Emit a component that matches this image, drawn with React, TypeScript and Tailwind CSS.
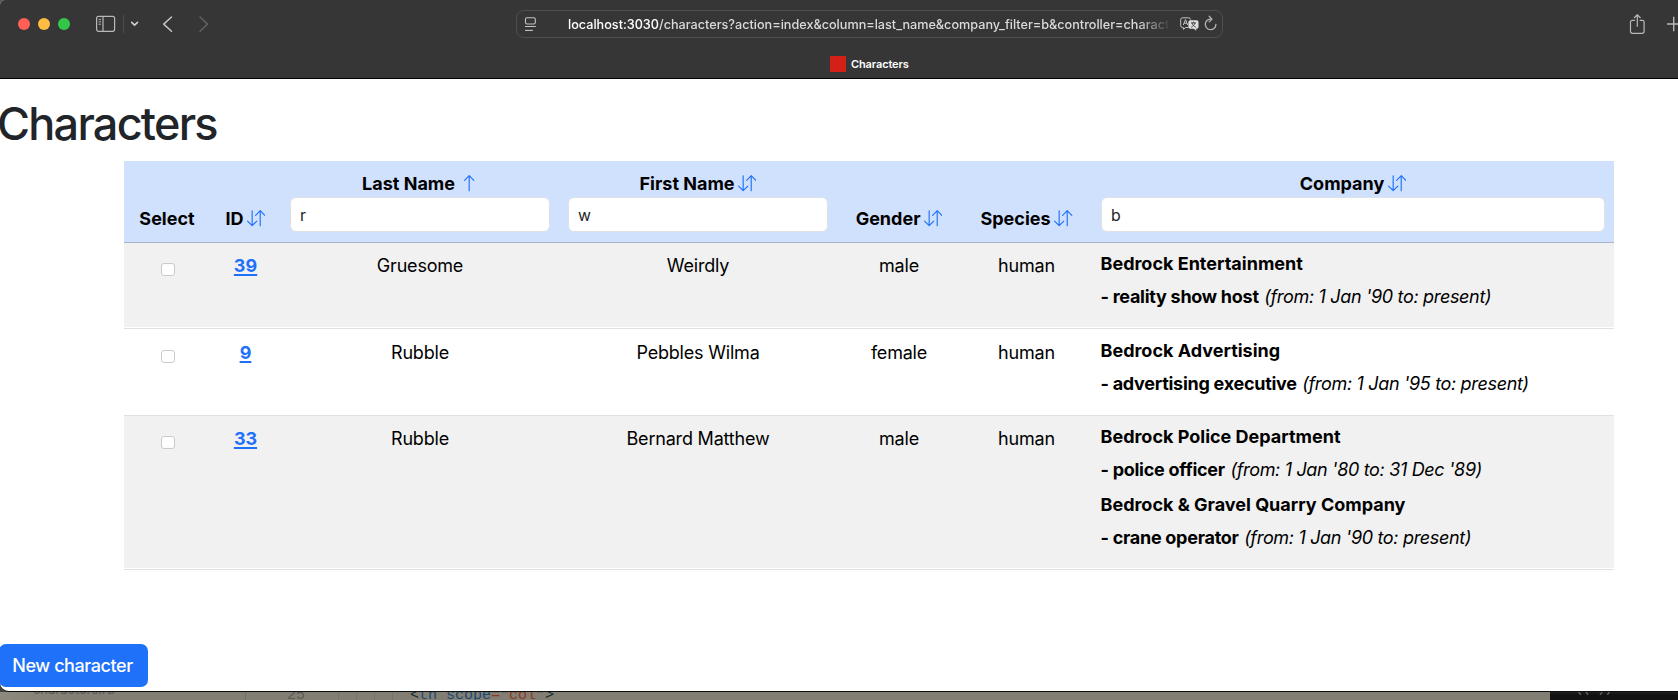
import type { ReactNode } from "react";
import { BsArrowDownUp, BsArrowUp } from "react-icons/bs";

type Job = { company: string; role: string; dates: string };
type Character = { id: number; last: string; first: string; gender: string; species: string; jobs: Job[] };

const characters: Character[] = [
  {
    id: 39,
    last: "Gruesome",
    first: "Weirdly",
    gender: "male",
    species: "human",
    jobs: [{ company: "Bedrock Entertainment", role: "reality show host", dates: "(from: 1 Jan '90 to: present)" }],
  },
  {
    id: 9,
    last: "Rubble",
    first: "Pebbles Wilma",
    gender: "female",
    species: "human",
    jobs: [{ company: "Bedrock Advertising", role: "advertising executive", dates: "(from: 1 Jan '95 to: present)" }],
  },
  {
    id: 33,
    last: "Rubble",
    first: "Bernard Matthew",
    gender: "male",
    species: "human",
    jobs: [
      { company: "Bedrock Police Department", role: "police officer", dates: "(from: 1 Jan '80 to: 31 Dec '89)" },
      { company: "Bedrock & Gravel Quarry Company", role: "crane operator", dates: "(from: 1 Jan '90 to: present)" },
    ],
  },
];

const rowStyles = [
  "h-[86px] [&>td]:pt-[9px] bg-[#f1f1f1] [&>td]:shadow-[inset_0_-1px_0_#ffffff]",
  "h-[87px] [&>td]:pt-[10px] bg-white",
  "h-[154px] [&>td]:pt-[9px] bg-[#f1f1f1] [&>td]:shadow-[inset_0_-1px_0_#ffffff]",
];

function SidebarIcon() {
  return (
    <svg width="20" height="18" viewBox="0 0 20 18" fill="none" stroke="#b9b9b9" strokeWidth="1.2">
      <rect x="0.6" y="1.3" width="18" height="15" rx="2" />
      <path d="M7 1.5v14.6" />
      <path d="M2.6 4.4h2.4M2.6 6.8h2.4M2.6 9.2h2.4" strokeWidth="1" />
    </svg>
  );
}

function TranslateIcon() {
  return (
    <svg width="19" height="15" viewBox="0 0 19 15" fill="none">
      <path
        d="M8.5 10.5H5.6L3.4 12.4V10.5H2.6A1.9 1.9 0 0 1 .7 8.6V2.7A1.9 1.9 0 0 1 2.6.8H8.6A1.9 1.9 0 0 1 10.5 2.5"
        stroke="#c4c4c4"
        strokeWidth="1"
      />
      <path d="M3.3 8 5.5 2.6 7.7 8M4.1 6.2h2.8" stroke="#c4c4c4" strokeWidth="1" />
      <path
        d="M10.3 3.2h6.3a1.9 1.9 0 0 1 1.9 1.9v4.7a1.9 1.9 0 0 1-1.9 1.9h-.4v2.1l-2.3-2.1h-3.6a1.9 1.9 0 0 1-1.9-1.9V5.1a1.9 1.9 0 0 1 1.9-1.9Z"
        fill="#dedede"
      />
      <path d="M11 5.9h5M13.5 4.7v1.2M15 6c-.5 1.8-2 3.3-3.8 4.2M12 6c.5 1.8 2 3.3 3.8 4.2" stroke="#363636" strokeWidth="0.9" />
    </svg>
  );
}

function Toolbar() {
  return (
    <div className="flex h-12 items-center">
      <div className="flex w-[516px] shrink-0 items-center pl-[18px]">
        <div className="flex gap-2">
          <span className="size-3 rounded-full bg-[#ff5f57]" />
          <span className="size-3 rounded-full bg-[#febc40]" />
          <span className="size-3 rounded-full bg-[#33c748]" />
        </div>
        <div className="ml-[26px] flex items-center">
          <SidebarIcon />
          <span className="ml-[7px] h-[18px] w-px bg-[#4c4c4c]" />
          <svg className="ml-[6px]" width="9" height="6" viewBox="0 0 9 6" fill="none" stroke="#cfcfcf" strokeWidth="1.6" strokeLinecap="round" strokeLinejoin="round">
            <path d="M1.7 1.4 4.6 4.2 7.5 1.4" />
          </svg>
        </div>
        <svg className="-mt-px ml-[23px]" width="12" height="18" viewBox="0 0 12 18" fill="none" stroke="#c4c4c4" strokeWidth="1.5" strokeLinecap="round" strokeLinejoin="round">
          <path d="M9.5 2 1.7 9.1l7.8 7.1" />
        </svg>
        <svg className="-mt-px ml-[24px]" width="12" height="18" viewBox="0 0 12 18" fill="none" stroke="#626262" strokeWidth="1.5" strokeLinecap="round" strokeLinejoin="round">
          <path d="M2 2l7.5 7.1L2 16.2" />
        </svg>
      </div>
      <div className="flex h-7 w-[707px] shrink-0 items-center rounded-lg border border-[#4f4f4f] pl-[7px]">
        <svg width="13" height="16" viewBox="0 0 13 16" fill="none" stroke="#c4c4c4" strokeWidth="1.1">
          <rect x="1.5" y="1.7" width="9.8" height="6.3" rx="1.5" />
          <path d="M1 10.5h10.8" strokeWidth="1" />
          <path d="M1 14.4h8" />
        </svg>
        <div className="mt-px ml-[31px] w-[603px] overflow-hidden whitespace-nowrap text-[12.65px] leading-5 font-medium text-[#dadada] [mask-image:linear-gradient(to_right,black_94.5%,transparent_100%)]">
          <span className="text-white">localhost:3030</span>/characters?action=index&amp;column=last_name&amp;company_filter=b&amp;controller=charact
        </div>
        <div className="ml-[9px] flex items-center">
          <TranslateIcon />
          <svg className="-mt-px ml-[5px]" width="14" height="17" viewBox="0 0 14 17" fill="none" stroke="#b4b4b4" strokeWidth="1.3" strokeLinecap="round">
            <path d="M7.2 4.1A5.3 5.3 0 1 0 11.9 9.4" />
            <path d="M5.2 1.3 8 4.1 5.2 6.9" strokeLinejoin="round" />
          </svg>
        </div>
      </div>
      <div className="flex flex-1 items-center justify-end overflow-hidden">
        <svg width="17" height="22" viewBox="0 0 17 22" fill="none" stroke="#b9b9b9" strokeWidth="1.2" strokeLinecap="round" strokeLinejoin="round">
          <path d="M5.5 7.3H3.3A1.8 1.8 0 0 0 1.5 9.1v9.4a1.8 1.8 0 0 0 1.8 1.8h10a1.8 1.8 0 0 0 1.8-1.8V9.1a1.8 1.8 0 0 0-1.8-1.8h-2.2" />
          <path d="M8.3 13.3V1.9M5.3 4.7l3-2.9 3 2.9" />
        </svg>
        <svg className="ml-[20px]" width="12" height="16" viewBox="0 0 12 16" fill="none" stroke="#b9b9b9" strokeWidth="1.4">
          <path d="M1 8h11M7.7.7v14.6" />
        </svg>
      </div>
    </div>
  );
}

function SortLabel({ children, icon = "both" }: { children: ReactNode; icon?: "both" | "up" }) {
  return (
    <div className="flex h-7 items-center justify-center text-[18px] leading-7 font-bold">
      {children}
      {icon === "up" ? (
        <BsArrowUp className="-mt-[2px] ml-[4.5px] size-[18.4px] text-[#1f71fa]" />
      ) : (
        <BsArrowDownUp className="-mt-[2px] ml-[3.5px] size-[18.4px] text-[#1f71fa]" />
      )}
    </div>
  );
}

function Filter({ value }: { value: string }) {
  return (
    <input
      type="text"
      defaultValue={value}
      className="-mt-px block h-[35px] w-full rounded-[6px] border border-[#dee2e6] bg-white px-[9px] pt-[2px] text-left text-[15.8px] font-normal text-[#212529]"
    />
  );
}

function FilterHeader({ label, value, icon }: { label: string; value: string; icon?: "both" | "up" }) {
  return (
    <div className="-mb-px px-[9px] pb-[2px]">
      <SortLabel icon={icon}>{label}</SortLabel>
      <Filter value={value} />
    </div>
  );
}

function CharactersTable() {
  return (
    <table className="w-[1490px] table-fixed border-separate border-spacing-0 text-black">
      <colgroup>
        <col className="w-[86px]" />
        <col className="w-[71px]" />
        <col className="w-[278px]" />
        <col className="w-[278px]" />
        <col className="w-[124px]" />
        <col className="w-[131px]" />
        <col className="w-[522px]" />
      </colgroup>
      <thead>
        <tr className="h-[82px] bg-[#d0e1fe] align-bottom [&>th]:border-b [&>th]:border-[#a6b5cc] [&>th]:p-0 [&>th]:pb-[9px]">
          <th className="text-[18px] leading-7 font-bold">Select</th>
          <th>
            <SortLabel>ID</SortLabel>
          </th>
          <th>
            <FilterHeader label="Last Name" value="r" icon="up" />
          </th>
          <th>
            <FilterHeader label="First Name" value="w" />
          </th>
          <th>
            <SortLabel>Gender</SortLabel>
          </th>
          <th>
            <SortLabel>Species</SortLabel>
          </th>
          <th>
            <FilterHeader label="Company" value="b" />
          </th>
        </tr>
      </thead>
      <tbody>
        {characters.map((c, i) => (
          <tr
            key={c.id}
            className={`align-top text-center text-[18px] leading-7 tracking-[-0.2px] [&>td]:border-b [&>td]:border-[#dee2e6] [&>td]:p-0 ${rowStyles[i]}`}
          >
            <td>
              <div className="flex justify-center pt-[11px]">
                <input type="checkbox" className="ml-[2px] h-[13px] w-[14px] appearance-none rounded-[3px] border border-[#cbcbcb] bg-white" />
              </div>
            </td>
            <td>
              <a href="#" className="font-bold tracking-normal text-[#1f71fa] underline decoration-2 underline-offset-2">
                {c.id}
              </a>
            </td>
            <td>{c.last}</td>
            <td>{c.first}</td>
            <td>{c.gender}</td>
            <td>{c.species}</td>
            <td>
              <div className="-mt-[5px] px-[8.5px] text-left leading-[33px]">
                {c.jobs.map((job) => (
                  <div key={job.company} className="h-[68px] whitespace-nowrap">
                    <div className="font-bold tracking-normal">{job.company}</div>
                    <div>
                      <span className="font-bold tracking-[-0.27px]">- {job.role}</span>
                      <em className="ml-[5.5px] tracking-[-0.33px]">{job.dates}</em>
                    </div>
                  </div>
                ))}
              </div>
            </td>
          </tr>
        ))}
      </tbody>
    </table>
  );
}

function BackgroundEditor() {
  return (
    <div className="flex h-2 overflow-hidden bg-[#827e74] font-['Liberation_Mono',monospace] text-[15px] leading-4 whitespace-nowrap">
      <div className="flex h-2 w-[245px] shrink-0 bg-linear-to-r from-[#8e897d] to-[#827e74] to-30%">
        <span className="-mt-[11px] ml-[11px] font-['Inter',sans-serif] text-[14px] text-[#5b5a54]">▪</span>
        <span className="-mt-[11px] ml-[14px] font-['Inter',sans-serif] text-[13px] text-[#5b5a54]">characters.rb</span>
      </div>
      <div className="flex h-2 w-[93px] shrink-0 border-l border-[#686f75] pl-[41px]">
        <span className="-mt-[4px] text-[#5c5a54]">25</span>
      </div>
      <div className="flex h-2">
        <span className="w-[18px] border-l border-[#77736a]" />
        <span className="w-[18px] border-l border-[#77736a]" />
        <span className="w-[18px] border-l border-[#77736a]" />
        <span className="w-[18px] border-l border-[#77736a]" />
      </div>
      <div className="-mt-[4px] flex-1 text-[#1b4a72]">
        <span className="text-[#152a2c]">&lt;</span>th scope<span className="text-[#8c3a22]">=</span>
        <span className="text-[#5c4a40]">"</span>
        <span className="text-[#8c3a22]">col</span>
        <span className="text-[#5c4a40]">"</span>
        <span className="text-[#152a2c]">&gt;</span>
      </div>
      <div className="flex h-2 w-[128px] shrink-0 border-t-2 border-[#1b1b1b] bg-[#121212] pl-[26px] text-[#707070]">
        <span className="-mt-[13px] text-[12px]">(( ))</span>
      </div>
    </div>
  );
}

export default function App() {
  return (
    <div className="h-[700px] w-[1678px] overflow-hidden font-['Inter',sans-serif]">
      <div className="bg-linear-to-b from-[#555555] from-50% to-[#45433e]">
        <div className="flex h-[692px] flex-col overflow-hidden rounded-tl-[5px] rounded-bl-[9px] border-b border-[#0c0f0c] bg-white">
          <header className="h-[79px] shrink-0 border-b border-black bg-[#363636]">
            <Toolbar />
            <div className="flex h-[30px] items-center gap-[5px] pt-[2px] pl-[830px]">
              <span className="size-4 bg-[#d42117]" />
              <span className="text-[11px] leading-4 font-semibold tracking-[-0.12px] text-white">Characters</span>
            </div>
          </header>
          <main className="flex flex-1 flex-col items-start">
            <h1 className="-ml-[3px] h-[82px] pt-[17px] text-[45px] leading-[55px] font-[550] tracking-[-1.75px] text-[#212529]">Characters</h1>
            <div className="ml-[124px] h-[483px]">
              <CharactersTable />
            </div>
            <button className="-ml-px h-[43px] w-[149px] rounded-[7px] bg-[#1f71fa] pr-[2px] text-[18px] font-medium tracking-[-0.42px] text-white">New character</button>
          </main>
        </div>
      </div>
      <BackgroundEditor />
    </div>
  );
}
